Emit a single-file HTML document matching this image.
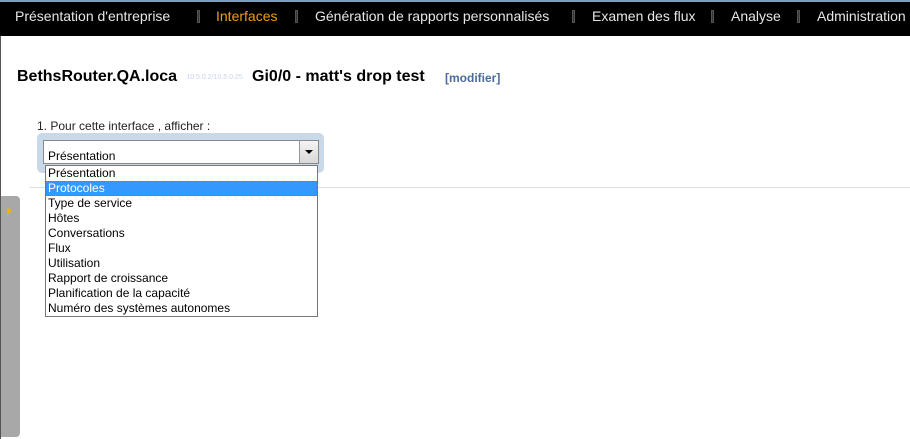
<!DOCTYPE html><html><head><style>
body{margin:0;width:910px;height:439px;position:relative;overflow:hidden;background:#fff;font-family:"Liberation Sans",Arial,sans-serif}
.top{position:absolute;left:0;top:0;width:910px;height:2px;background:#7f9bbd}
.nav{position:absolute;left:0;top:2px;width:910px;height:34px;background:#000}
.nav span{position:absolute;top:6px;font-size:14px;color:#e6e6e6;white-space:nowrap}
.sep{position:absolute;top:8px;width:3px;height:13px;background:#333;border:1px solid #555;box-sizing:border-box}
.lline{position:absolute;left:0;top:36px;width:1px;height:403px;background:#555}
h1{position:absolute;left:17px;top:68px;margin:0;font-size:16px;font-weight:bold;color:#000;white-space:nowrap}
.blur{display:inline-block;width:75px;font-size:7px;font-weight:normal;color:#c8d4ec;vertical-align:2px;text-align:center}
.mod{position:absolute;left:445px;top:71px;font-size:12px;font-weight:bold;color:#4a6b9c}
.lbl{position:absolute;left:37px;top:119px;font-size:12px;color:#222}
.halo{position:absolute;left:37px;top:133px;width:287px;height:40px;background:#c8d9ea;border-radius:5px}
.sel{position:absolute;left:43px;top:140px;width:276px;height:24px;background:#fff;border:1px solid #888;box-sizing:border-box}
.sel div{position:absolute;left:4px;top:8px;font-size:12px}
.btn{position:absolute;right:0;top:0;width:18px;height:22px;background:linear-gradient(#f4f4f4,#d8d8d8);border-left:1px solid #999}
.btn:after{content:"";position:absolute;left:5px;top:9px;border-left:4px solid transparent;border-right:4px solid transparent;border-top:4px solid #000}
.hr{position:absolute;left:30px;top:187px;width:880px;height:1px;background:#ddd}
.list{position:absolute;left:45px;top:165px;width:273px;height:152px;background:#fff;border:1px solid #777;box-sizing:border-box}
.list div{height:15px;line-height:15px;font-size:12px;padding-left:2px;color:#000;white-space:nowrap}
.list .s{background:#3399ff;color:#fff;outline:1px dotted #c60;outline-offset:-1px}
.strip{position:absolute;left:1px;top:196px;width:19px;height:241px;background:#a8a8a8;border-radius:0 4px 4px 0}
.strip:after{content:"";position:absolute;left:6px;top:11px;border-top:4px solid transparent;border-bottom:4px solid transparent;border-left:5px solid #f0b400}
</style></head><body>
<div class="top"></div>
<div class="nav">
<span style="left:15px">Présentation d'entreprise</span><div class="sep" style="left:197px"></div>
<span style="left:216px;color:#f39c12">Interfaces</span><div class="sep" style="left:295px"></div>
<span style="left:315px">Génération de rapports personnalisés</span><div class="sep" style="left:572px"></div>
<span style="left:592px">Examen des flux</span><div class="sep" style="left:711px"></div>
<span style="left:731px">Analyse</span><div class="sep" style="left:797px"></div>
<span style="left:817px">Administration</span>
</div>
<div class="lline"></div>
<h1>BethsRouter.QA.loca<span class="blur">10.5.0.2/10.5.0.25</span>Gi0/0 - matt's drop test</h1>
<div class="mod">[modifier]</div>
<div class="lbl">1. Pour cette interface , afficher :</div>
<div class="halo"></div>
<div class="hr"></div>
<div class="sel"><div>Présentation</div><span class="btn"></span></div>
<div class="list">
<div>Présentation</div><div class="s">Protocoles</div><div>Type de service</div><div>Hôtes</div><div>Conversations</div><div>Flux</div><div>Utilisation</div><div>Rapport de croissance</div><div>Planification de la capacité</div><div>Numéro des systèmes autonomes</div>
</div>
<div class="strip"></div>
</body></html>
